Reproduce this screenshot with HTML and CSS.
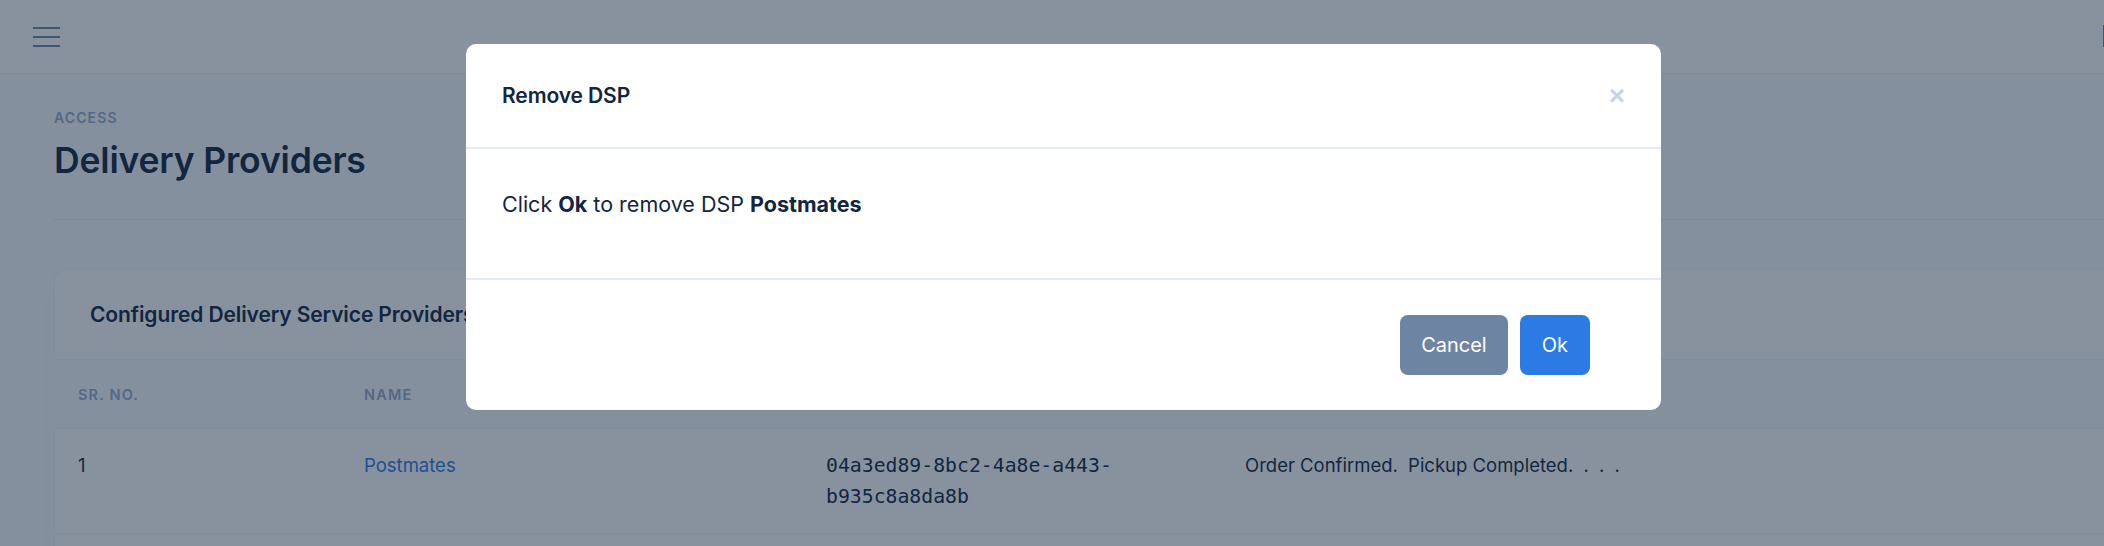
FILE: index.html
```html
<!DOCTYPE html>
<html lang="en">

<head>
    <meta charset="UTF-8">
    <meta name="viewport" content="width=device-width, initial-scale=1.0">
    <title>Delivery Providers</title>
    <link rel="stylesheet" href="styles.css">
</head>

<body>

    <header class="topnav">
        <button class="menu-toggle" aria-label="Menu">
            <span></span>
            <span></span>
            <span></span>
        </button>
        <div class="nav-edge"></div>
    </header>

    <main class="main">
        <div class="page-header">
            <h6 class="pretitle">Access</h6>
            <h1 class="page-title">Delivery Providers</h1>
        </div>

        <div class="card">
            <div class="card-header">
                <h4 class="card-title">Configured Delivery Service Providers</h4>
            </div>
            <table class="table">
                <colgroup>
                    <col class="col-sr">
                    <col class="col-name">
                    <col class="col-id">
                    <col>
                </colgroup>
                <thead>
                    <tr>
                        <th>Sr. No.</th>
                        <th>Name</th>
                        <th>Id</th>
                        <th>Events</th>
                    </tr>
                </thead>
                <tbody>
                    <tr>
                        <td>1</td>
                        <td><a href="#">Postmates</a></td>
                        <td><code>04a3ed89-8bc2-4a8e-a443-b935c8a8da8b</code></td>
                        <td>
                            <span class="event">Order Confirmed.</span>
                            <span class="event">Pickup Completed.</span>
                            <span class="event">.</span>
                            <span class="event">.</span>
                            <span class="event">.</span>
                        </td>
                    </tr>
                    <tr>
                        <td></td>
                        <td></td>
                        <td></td>
                        <td></td>
                    </tr>
                </tbody>
            </table>
        </div>
    </main>

    <div class="backdrop"></div>

    <div class="modal">
        <div class="modal-header">
            <h5 class="modal-title">Remove DSP</h5>
            <button class="close" aria-label="Close">&times;</button>
        </div>
        <div class="modal-body">
            <p>Click <b>Ok</b> to remove DSP <b>Postmates</b></p>
        </div>
        <div class="modal-footer">
            <button class="btn btn-secondary">Cancel</button>
            <button class="btn btn-primary">Ok</button>
        </div>
    </div>

</body>

</html>
```

FILE: styles.css
```css
body {
    font-family: 'Inter', 'Liberation Sans', sans-serif;
    background-color: #f9fbfd;
    color: #12263f;
    margin: 0;
    padding: 0;
    height: 546px;
    overflow: hidden;
}

.topnav {
    height: 73px;
    background-color: #fff;
    border-bottom: 1px solid #e3ebf6;
    display: flex;
    align-items: center;
    justify-content: space-between;
    padding-left: 33px;
}

.menu-toggle {
    display: flex;
    flex-direction: column;
    gap: 7px;
    padding: 0;
    border: none;
    background: none;
}

.menu-toggle span {
    display: block;
    width: 27px;
    height: 2px;
    background-color: #6e84a3;
}

.nav-edge {
    width: 1px;
    height: 22px;
    background-color: #6e84a3;
    margin-bottom: 1px;
}

.main {
    padding-left: 54px;
    width: 2300px;
}

.page-header {
    padding-top: 36px;
    padding-bottom: 39px;
    border-bottom: 1px solid #e3ebf6;
}

.pretitle {
    margin: 0 0 17px;
    font-size: 14px;
    line-height: 15px;
    font-weight: 600;
    letter-spacing: 0.08em;
    text-transform: uppercase;
    color: #95aac9;
}

.page-title {
    margin: 0;
    font-size: 35.5px;
    line-height: 38px;
    font-weight: 600;
    letter-spacing: -0.005em;
}

.card {
    margin-top: 49px;
    background-color: #fff;
    border: 1px solid #edf2f9;
    border-radius: 11px;
    box-shadow: 0 16px 32px rgba(18, 38, 63, 0.03);
}

.card-header {
    height: 89px;
    display: flex;
    align-items: center;
    padding: 0 35px;
    border-bottom: 1px solid #edf2f9;
}

.card-title {
    margin: 0;
    font-size: 21px;
    font-weight: 600;
    letter-spacing: -0.005em;
}

.table {
    border-collapse: collapse;
    table-layout: fixed;
    width: 100%;
}

.col-sr {
    width: 286px;
}

.col-name {
    width: 462px;
}

.col-id {
    width: 419px;
}

.table th {
    height: 68px;
    padding: 0 23px;
    text-align: left;
    font-size: 14.5px;
    font-weight: 600;
    letter-spacing: 0.08em;
    text-transform: uppercase;
    color: #95aac9;
    background-color: #f9fbfd;
    border-bottom: 1px solid #edf2f9;
}

.table td {
    height: 60px;
    padding: 21px 23px;
    vertical-align: top;
    font-size: 18.5px;
    line-height: 30px;
    border-bottom: 1px solid #edf2f9;
}

.table a {
    color: #2c7be5;
    text-decoration: none;
}

code {
    font-family: 'DejaVu Sans Mono', 'Liberation Mono', monospace;
    font-size: 19.8px;
    color: #12263f;
}

.event {
    margin-right: 5px;
}

.backdrop {
    position: fixed;
    inset: 0;
    background-color: rgba(18, 38, 63, 0.5);
}

.modal {
    position: fixed;
    top: 44px;
    left: 466px;
    width: 1195px;
    background-color: #fff;
    border-radius: 10px;
}

.modal-header {
    height: 103px;
    display: flex;
    align-items: center;
    justify-content: space-between;
    padding: 0 36px;
    border-bottom: 2px solid #e3ebf6;
}

.modal-title {
    margin: 0;
    font-size: 21px;
    font-weight: 600;
    letter-spacing: -0.005em;
}

.close {
    padding: 0;
    border: none;
    background: none;
    font-family: 'Liberation Sans', sans-serif;
    font-size: 28px;
    font-weight: 700;
    line-height: 1;
    color: #cad4e4;
}

.modal-body {
    padding: 40px 36px;
    border-bottom: 2px solid #e3ebf6;
}

.modal-body p {
    margin: 0 0 19px;
    font-size: 21.5px;
    line-height: 30px;
}

.modal-footer {
    height: 130px;
    display: flex;
    align-items: center;
    justify-content: flex-end;
    gap: 12px;
    padding-right: 71px;
}

.btn {
    height: 60px;
    padding: 0 22px;
    border: none;
    border-radius: 8px;
    font-family: 'Inter', 'Liberation Sans', sans-serif;
    font-size: 20px;
    color: #fff;
}

.btn-secondary {
    padding: 0 21px;
    background-color: #6e84a3;
}

.btn-primary {
    background-color: #2c7be5;
}
```
